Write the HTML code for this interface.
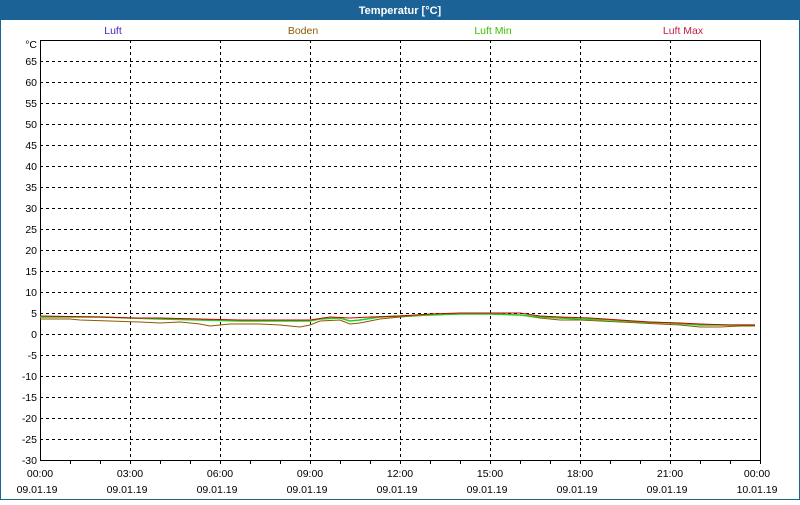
<!DOCTYPE html>
<html><head><meta charset="utf-8"><style>
body{margin:0;width:800px;height:500px;overflow:hidden;background:#fff;font-family:"Liberation Sans",sans-serif}
</style></head><body>
<svg width="800" height="500" xmlns="http://www.w3.org/2000/svg" font-family="Liberation Sans, sans-serif" font-size="10.5">
<rect x="0" y="0" width="800" height="500" fill="#fff"/>
<rect x="0.5" y="0.5" width="799" height="499" fill="none" stroke="#1b6296"/>
<rect x="0" y="0" width="800" height="20" fill="#1b6296"/>
<text x="400" y="14" fill="#fff" font-weight="bold" font-size="11" text-anchor="middle">Temperatur [°C]</text>
<g text-anchor="middle" font-size="10.5">
<text x="113" y="34" fill="#5020c0">Luft</text>
<text x="303" y="34" fill="#8b5a00">Boden</text>
<text x="493" y="34" fill="#40c000">Luft Min</text>
<text x="683" y="34" fill="#c02040">Luft Max</text>
</g>
<g stroke="#000" stroke-dasharray="3,3" stroke-width="1">
<path d="M40 61.5H760M40 82.5H760M40 103.5H760M40 124.5H760M40 145.5H760M40 166.5H760M40 187.5H760M40 208.5H760M40 229.5H760M40 250.5H760M40 271.5H760M40 292.5H760M40 313.5H760M40 334.5H760M40 355.5H760M40 376.5H760M40 397.5H760M40 418.5H760M40 439.5H760"/>
<path d="M130.5 40V460M220.5 40V460M310.5 40V460M400.5 40V460M490.5 40V460M580.5 40V460M670.5 40V460"/>
</g>
<rect x="40.5" y="40.5" width="720" height="420" fill="none" stroke="#000"/>
<g stroke="#000"><path d="M70.5 460v4M100.5 460v4M130.5 460v4M160.5 460v4M190.5 460v4M220.5 460v4M250.5 460v4M280.5 460v4M310.5 460v4M340.5 460v4M370.5 460v4M400.5 460v4M430.5 460v4M460.5 460v4M490.5 460v4M520.5 460v4M550.5 460v4M580.5 460v4M610.5 460v4M640.5 460v4M670.5 460v4M700.5 460v4M730.5 460v4M760.5 460v4"/></g>
<g text-anchor="end" font-size="10.5" fill="#000">
<text x="37" y="48">°C</text>
<text x="37" y="65">65</text><text x="37" y="86">60</text><text x="37" y="107">55</text><text x="37" y="128">50</text><text x="37" y="149">45</text><text x="37" y="170">40</text><text x="37" y="191">35</text><text x="37" y="212">30</text><text x="37" y="233">25</text><text x="37" y="254">20</text><text x="37" y="275">15</text><text x="37" y="296">10</text><text x="37" y="317">5</text><text x="37" y="338">0</text><text x="37" y="359">-5</text><text x="37" y="380">-10</text><text x="37" y="401">-15</text><text x="37" y="422">-20</text><text x="37" y="443">-25</text><text x="37" y="464">-30</text>
</g>
<g text-anchor="middle" font-size="10.5" fill="#000">
<text x="40" y="477">00:00</text><text x="130" y="477">03:00</text><text x="220" y="477">06:00</text><text x="310" y="477">09:00</text><text x="400" y="477">12:00</text><text x="490" y="477">15:00</text><text x="580" y="477">18:00</text><text x="670" y="477">21:00</text><text x="757" y="477">00:00</text>
<text x="37" y="493">09.01.19</text><text x="127" y="493">09.01.19</text><text x="217" y="493">09.01.19</text><text x="307" y="493">09.01.19</text><text x="397" y="493">09.01.19</text><text x="487" y="493">09.01.19</text><text x="577" y="493">09.01.19</text><text x="667" y="493">09.01.19</text><text x="757" y="493">10.01.19</text>
</g>
<g fill="none" stroke-width="1">
<polyline stroke="#8b5a00" points="40,319 70,319 80,320 110,321 140,322 160,323 180,322 200,324 210,326 230,324 260,324 280,325 290,326 300,327 310,325 320,321 340,320 350,324 360,323 370,321 380,319 400,317 430,315 460,314 490,314 520,315 540,318 560,320 580,320 600,321 620,322 640,323 660,324 680,325 700,327 720,327 740,326 755,326"/>
<polyline stroke="#20d020" stroke-width="1.5" points="40,317 100,317 130,318 160,319 200,320 240,321 280,321 310,321 320,319 340,318 350,321 360,320 380,317 400,316 430,315 460,314 490,314 520,315 540,317 560,318 580,319 610,320 640,322 670,323 700,325 730,325 755,325"/>
<polyline stroke="#d00000" points="40,316 100,317 130,318 160,318 200,319 240,320 280,320 310,320 330,317 350,318 370,317 400,316 430,314 460,313 490,313 520,313 540,316 560,317 590,318 620,320 650,322 680,323 700,324 730,325 755,325"/>
</g>
</svg>
</body></html>
